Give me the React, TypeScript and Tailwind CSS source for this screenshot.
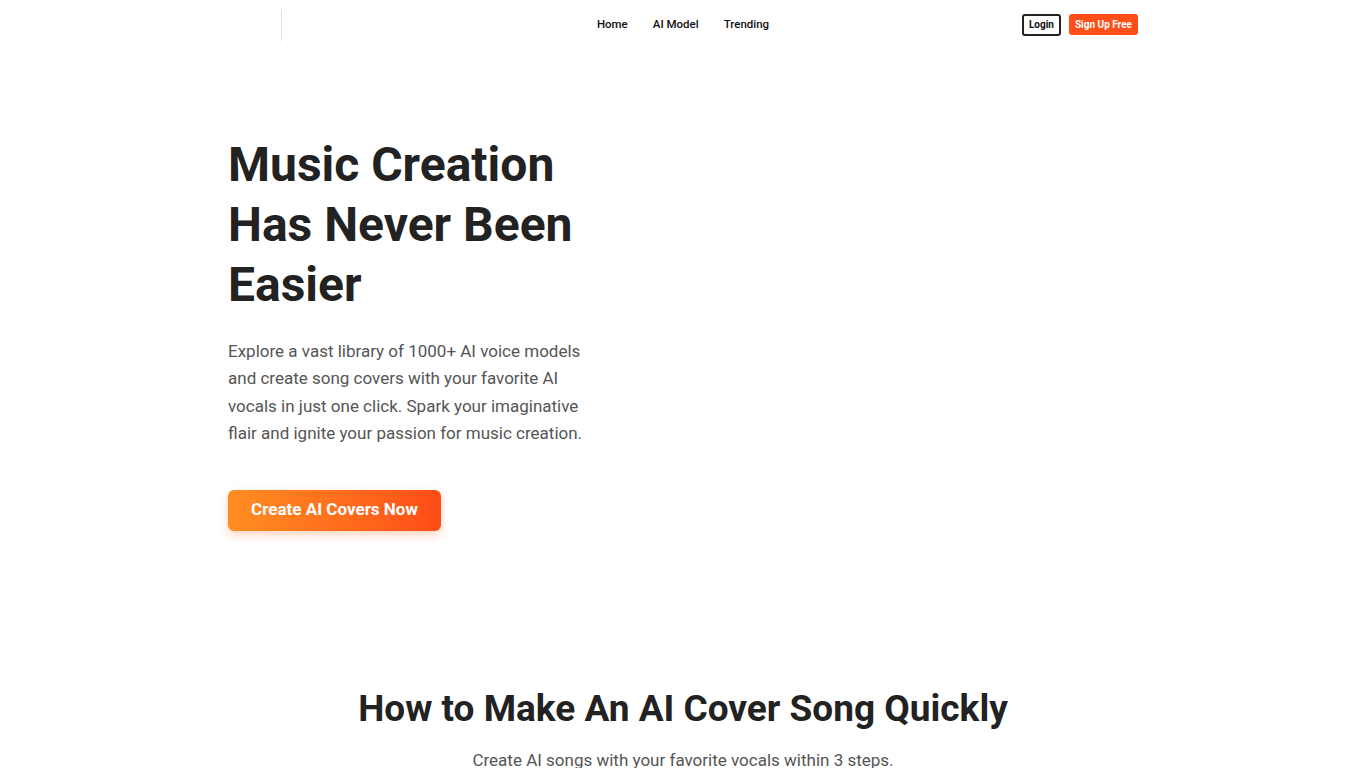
import React from "react";

export default function App() {
  return (
    <div className="min-h-screen bg-white text-[#222222] font-['Roboto',_'Liberation_Sans',_sans-serif]">
      <header className="h-[49px] w-[910px] mx-auto grid grid-cols-[1fr_auto_1fr] items-center">
        <div className="w-[54px] h-[32px] border-r border-[#dddddd]" />
        <nav className="flex justify-center gap-[25px] text-[11.5px] font-medium text-[#111111]">
          <a href="#">Home</a>
          <a href="#">AI Model</a>
          <a href="#">Trending</a>
        </nav>
        <div className="flex items-center justify-end gap-2">
          <button className="h-[22px] px-[5px] border-2 border-[#222222] rounded-[3px] text-[10px] font-bold text-[#111111] leading-none">
            Login
          </button>
          <button className="h-[21px] px-[6px] bg-[#ff4e17] rounded-[3px] text-[10px] font-bold text-white leading-none">
            Sign Up Free
          </button>
        </div>
      </header>

      <main>
        <section className="w-[910px] mx-auto pt-[86px] pb-[155px]">
          <h1 className="text-[48px] leading-[60px] font-bold w-[400px] text-[#222222]">
            Music Creation Has Never Been Easier
          </h1>
          <p className="mt-[23px] w-[365px] text-[17px] leading-[27.4px] text-[#555555]">
            Explore a vast library of 1000+ AI voice models and create song covers with your favorite AI vocals in just one click. Spark your imaginative flair and ignite your passion for music creation.
          </p>
          <button className="mt-[42px] h-[41px] w-[213px] rounded-[6px] bg-gradient-to-r from-[#ff8d22] to-[#ff4b18] text-white text-[17px] font-bold shadow-[0_4px_10px_rgba(255,110,40,0.3)]">
            Create AI Covers Now
          </button>
        </section>

        <section className="text-center">
          <h2 className="text-[37px] leading-[46px] font-bold text-[#222222]">
            How to Make An AI Cover Song Quickly
          </h2>
          <p className="mt-[16px] text-[17px] text-[#555555]">
            Create AI songs with your favorite vocals within 3 steps.
          </p>
        </section>
      </main>
    </div>
  );
}
